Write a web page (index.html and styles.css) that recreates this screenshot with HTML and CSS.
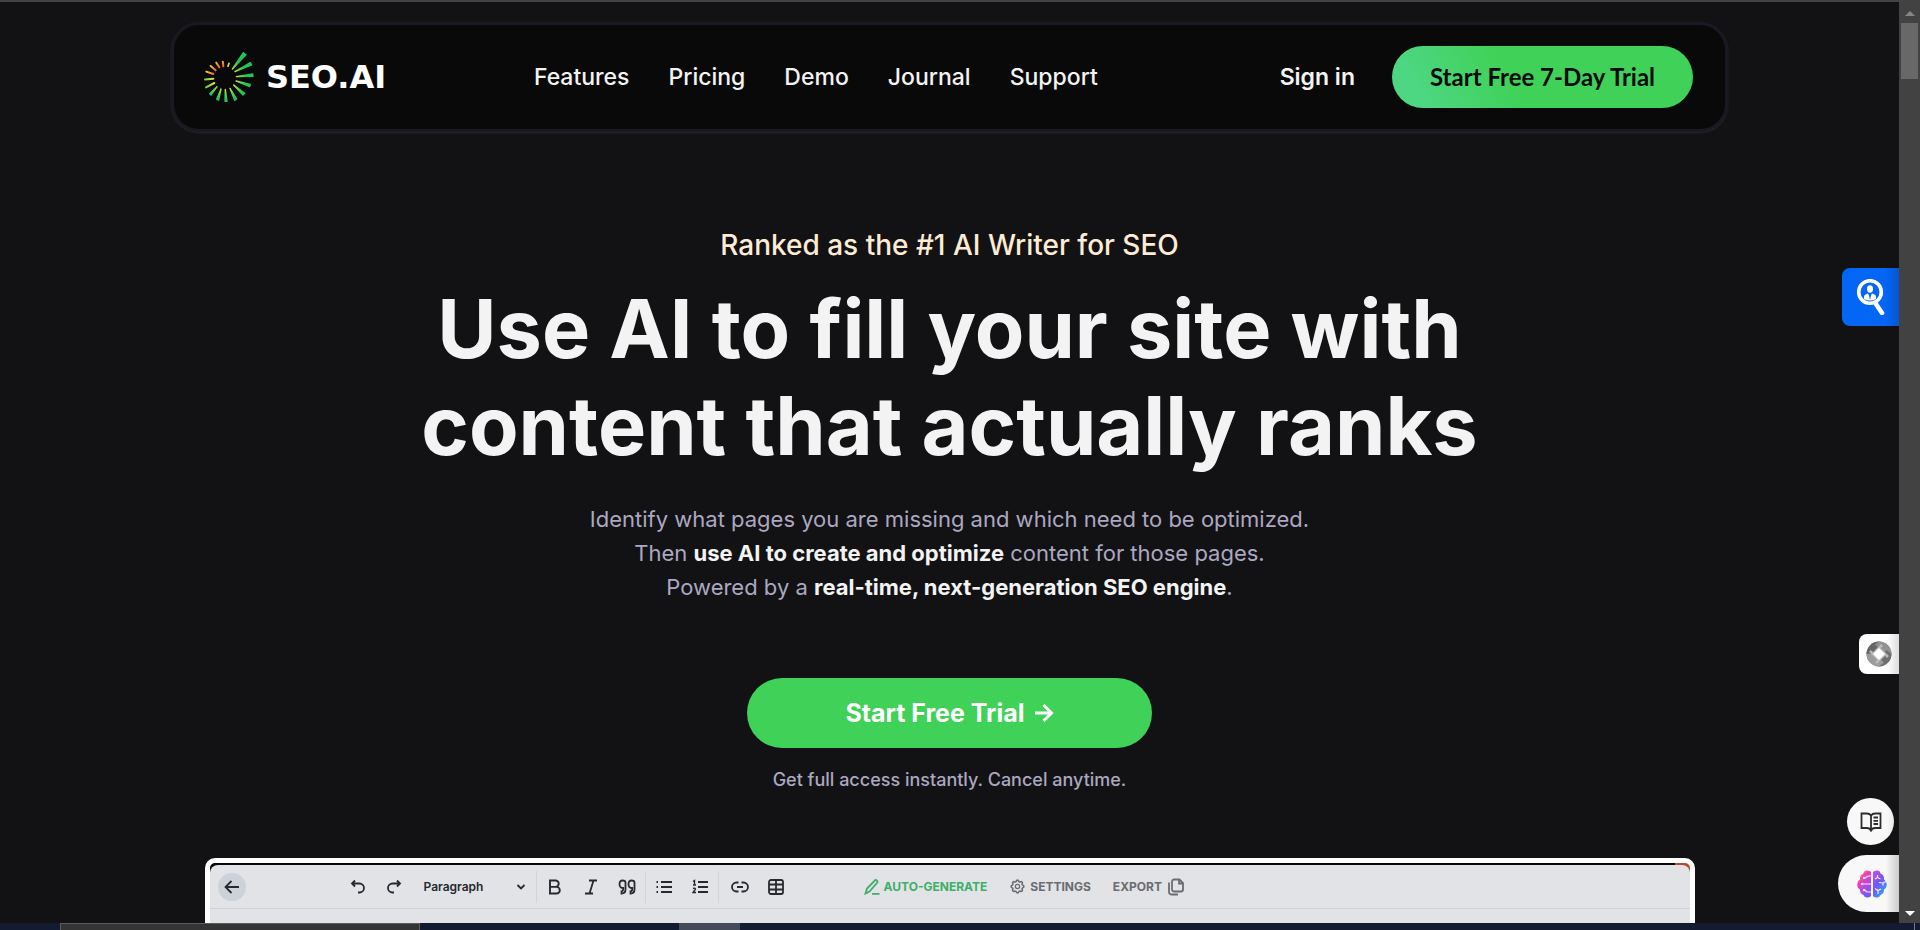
FILE: index.html
```html
<!DOCTYPE html>
<html lang="en">
<head>
<meta charset="utf-8">
<title>SEO.AI</title>
<link rel="stylesheet" href="styles.css">
</head>
<body>
<div class="window">
  <div class="viewport">
    <div class="page">
      <header class="site-header">
        <a class="logo" href="#">
          <svg class="logo-mark" viewBox="125 147 165 165" aria-hidden="true">
            <defs>
              <radialGradient id="green" gradientUnits="userSpaceOnUse" cx="195" cy="232" r="80">
                <stop offset=".38" stop-color="#d9ec3e"/><stop offset=".6" stop-color="#5fd64a"/><stop offset=".8" stop-color="#22c45a"/>
              </radialGradient>
              <radialGradient id="lime" gradientUnits="userSpaceOnUse" cx="195" cy="232" r="70">
                <stop offset=".45" stop-color="#f0e548"/><stop offset=".9" stop-color="#5fd54c"/>
              </radialGradient>
              <radialGradient id="warm" gradientUnits="userSpaceOnUse" cx="195" cy="232" r="62">
                <stop offset=".55" stop-color="#f0592c"/><stop offset="1" stop-color="#f2d341"/>
              </radialGradient>
            </defs>
            <g stroke="url(#green)" fill="url(#green)" stroke-width="4" stroke-linejoin="round" stroke-linecap="round">
              <path d="M216 204 249 155 257 161Z"/><path d="M224 212 270 185 274 192Z"/><path d="M228 227 277 219 278 226Z"/>
              <path d="M227 240 270 250 268 257Z"/><path d="M220 252 253 277 248 282Z"/><path d="M209 262 229 294 223 298Z"/>
              <path d="M195 265 200 301 194 301Z"/><path d="M182 264 175 297 169 295Z"/><path d="M170 257 152 282 148 278Z"/>
            </g>
            <g stroke="url(#lime)" stroke-width="6" stroke-linecap="round">
              <path d="M162 246 137 259M159 233 134 235.500"/>
            </g>
            <g stroke="url(#warm)" stroke-width="6" stroke-linecap="round">
              <path d="M159 219 138 212M166 208 151 195M177 199 168 185M189 196 187.500 182"/>
            </g>
            <path d="M203 196 206 187" stroke="#e6dc43" stroke-width="5" stroke-linecap="round"/>
          </svg>
          <span class="logo-text">SEO.AI</span>
        </a>
        <nav class="nav">
          <a href="#">Features</a>
          <a href="#">Pricing</a>
          <a href="#">Demo</a>
          <a href="#">Journal</a>
          <a href="#">Support</a>
        </nav>
        <div class="actions">
          <a class="sign-in" href="#">Sign in</a>
          <a class="trial" href="#">Start Free 7-Day Trial</a>
        </div>
      </header>

      <main class="hero">
        <p class="eyebrow">Ranked as the #1 AI Writer for SEO</p>
        <h1>Use AI to fill your site with<br>content that actually ranks</h1>
        <p class="lead">Identify what pages you are missing and which need to be optimized.<br>Then <strong>use AI to create and optimize</strong> content for those pages.<br>Powered by a <strong>real-time, next-generation SEO engine</strong>.</p>
        <a class="cta" href="#">Start Free Trial
          <svg width="20" height="20" viewBox="0 0 20 20" fill="none" stroke="currentColor" stroke-width="3" aria-hidden="true"><path d="M1 10h16M9.500 2l8 8-8 8"/></svg>
        </a>
        <p class="note">Get full access instantly. Cancel anytime.</p>
      </main>

      <section class="preview" aria-label="Editor preview">
        <div class="editor">
          <div class="toolbar">
            <button class="back" aria-label="Back"><svg width="16" height="16" viewBox="0 0 16 16"><path d="M15 8H2M7.500 2 1.500 8l6 6"/></svg></button>
            <div class="tools">
              <button class="tool" aria-label="Undo"><svg width="16" height="16" viewBox="0 0 16 16"><path d="M5 1.500 2 4.500l3 3M2 4.500h7.500a4.500 4.500 0 0 1 0 9H8"/></svg></button>
              <button class="tool" aria-label="Redo"><svg width="16" height="16" viewBox="0 0 16 16"><path d="m11 1.500 3 3-3 3M14 4.500H6.500a4.500 4.500 0 0 0 0 9H8"/></svg></button>
              <div class="style-picker">
                <select aria-label="Text style"><option>Paragraph</option></select>
                <svg width="10" height="10" viewBox="0 0 10 10"><path d="m1.500 3 3.500 3.500L8.500 3"/></svg>
              </div>
            </div>
            <div class="tools ruled">
              <button class="tool" aria-label="Bold"><svg width="16" height="16" viewBox="0 0 16 16"><path d="M3 1.500h5.500a3.200 3.200 0 0 1 0 6.400H3zM3 7.900h6.500a3.300 3.300 0 0 1 0 6.600H3z" stroke-width="1.900"/></svg></button>
              <button class="tool" aria-label="Italic"><svg width="16" height="16" viewBox="0 0 16 16"><path d="M6 1.500h8M2 14.500h8M10.500 1.500l-4 13"/></svg></button>
              <button class="tool" aria-label="Quote"><svg width="18" height="16" viewBox="0 0 18 16"><path d="M7.500 3.500v7c0 2.500-1.500 4-4 4v-2.200c1 0 1.700-.8 1.700-2V9C3 9 1.500 7.800 1.500 5.200S2.600 1.500 4.500 1.500s3 .8 3 2zM16.500 3.500v7c0 2.500-1.500 4-4 4v-2.200c1 0 1.700-.8 1.700-2V9c-2.200 0-3.700-1.200-3.700-3.800s1.100-3.700 3-3.700 3 .8 3 2z"/></svg></button>
            </div>
            <div class="tools ruled">
              <button class="tool" aria-label="Bulleted list"><svg width="16" height="16" viewBox="0 0 16 16"><path d="M5 3h11M5 8h11M5 13h11M.5 3H2M.5 8H2M.5 13H2"/></svg></button>
              <button class="tool" aria-label="Numbered list"><svg width="16" height="16" viewBox="0 0 16 16"><path d="M6 3h10M6 8h10M6 13h10"/><path d="M1 2.500 2.500 1.500V6M1 6h3M1 9.500c2.500-1 3 .5 1.500 2L1 13.500h3" stroke-width="1.400"/></svg></button>
            </div>
            <div class="tools ruled links">
              <button class="tool" aria-label="Link"><svg width="18" height="16" viewBox="0 0 18 16"><path d="M7.500 3.500H5.500a4.500 4.500 0 0 0 0 9h2M10.500 3.500h2a4.500 4.500 0 0 1 0 9h-2M6 8h6"/></svg></button>
              <button class="tool" aria-label="Table"><svg width="16" height="16" viewBox="0 0 16 16"><rect x="1" y="1" width="14" height="14" rx="2"/><path d="M1 5.500h14M1 10.500h14M8 1v14"/></svg></button>
            </div>
            <div class="commands">
              <button class="command generate"><svg width="16" height="16" viewBox="0 0 16 16"><path d="M1.500 14.500 3 9.500 10.500 1.800a1.600 1.600 0 0 1 2.600 2L5.500 12.500l-4 2zM8 14.800h7.500"/></svg>AUTO-GENERATE</button>
              <button class="command"><svg width="17" height="17" viewBox="0 0 24 24"><path stroke-width="2.200" d="M10.300 4.300c.4-1.700 3-1.700 3.400 0a1.700 1.700 0 0 0 2.600 1.100c1.500-1 3.300.8 2.400 2.300a1.700 1.700 0 0 0 1 2.600c1.800.4 1.800 3 0 3.400a1.700 1.700 0 0 0-1 2.600c.9 1.500-.9 3.300-2.400 2.400a1.700 1.700 0 0 0-2.600 1c-.4 1.800-3 1.800-3.400 0a1.700 1.700 0 0 0-2.600-1c-1.500.9-3.300-.9-2.400-2.400a1.700 1.700 0 0 0-1-2.600c-1.800-.4-1.800-3 0-3.400a1.700 1.700 0 0 0 1-2.600c-.9-1.500.9-3.300 2.400-2.300a1.700 1.700 0 0 0 2.600-1.100z"/><circle cx="12" cy="12" r="3"/></svg>SETTINGS</button>
              <button class="command export">EXPORT<svg width="16" height="18" viewBox="0 0 16 18"><path d="M6 1.500h5.500L15 5v6.500a2 2 0 0 1-2 2H6a2 2 0 0 1-2-2v-8a2 2 0 0 1 2-2zM11 1.500V5.500h4M1 4.500V14a2.500 2.500 0 0 0 2.500 2.500H10"/></svg></button>
            </div>
          </div>
        </div>
      </section>

      <button class="dock dock-search" aria-label="People search">
        <svg width="30" height="36" viewBox="0 0 30 36"><path d="M20 25l6 9" stroke="#fff" stroke-width="4.500" stroke-linecap="round"/><circle cx="14" cy="13" r="11.300" fill="#0466f5" stroke="#fff" stroke-width="3.600"/><ellipse cx="14" cy="10" rx="3" ry="3.700" fill="#fff"/><path d="M8 20v-2.500c0-1.500 2-2.500 4-3l2 4 2-4c2 .5 4 1.500 4 3V20q-6 3-12 0z" fill="#fff"/><path d="M14 15v5" stroke="#0466f5"/></svg>
      </button>
      <button class="dock dock-ring" aria-label="Assistant">
        <svg width="26" height="26" viewBox="0 0 26 26"><circle cx="13" cy="13" r="12.500" fill="#8d8d8d"/><path d="M13 .5A12.500 12.500 0 0 0 .5 13L7 13 17 4z" fill="#666"/><path d="M25.500 13A12.500 12.500 0 0 0 13 .5l-4 3 10 9z" fill="#929292"/><path d="M13 25.500A12.500 12.500 0 0 0 25.500 13l-5-4-9 11z" fill="#6f6f6f"/><path d="M.5 13A12.500 12.500 0 0 0 13 25.500l5-4-11-9z" fill="#9c9c9c"/><path d="M7 13l9-9M13 7l9 9M19 13l-9 9M13 19l-9-9" stroke="#bababa" stroke-width="2.500"/><path d="M13 7l6 6-6 6-6-6z" fill="#fff"/></svg>
      </button>
      <button class="dock dock-book" aria-label="Reader">
        <svg width="22" height="20" viewBox="0 0 22 20" fill="none" stroke="#2d2d2d" stroke-width="1.800"><path d="M11 3.500Q9.500 1.500 7 1.500H1.500v14.500H7q2.800 0 4 2.500 1.200-2.500 4-2.500h5.500V1.500H15q-2.500 0-4 2zM11 3.500V18M13.500 5.500H18M13.500 8.800H18M13.500 12H18"/></svg>
      </button>
      <button class="dock dock-brain" aria-label="AI sidebar">
        <svg width="30" height="28" viewBox="0 0 30 28"><defs><linearGradient id="left-lobe" x1="0" y1="0" x2=".6" y2="1"><stop offset=".1" stop-color="#ff9a2d"/><stop offset=".4" stop-color="#f23bc0"/><stop offset="1" stop-color="#7556ff"/></linearGradient><linearGradient id="right-lobe" x1="0" y1="0" x2=".7" y2="1"><stop offset="0" stop-color="#d24be0"/><stop offset=".5" stop-color="#7258f5"/><stop offset="1" stop-color="#2faaff"/></linearGradient></defs><path d="M14 2v24q-2 2-4.500 1.500Q7 27 6.500 25 3 24 3 19.500 0 18 .3 14 .5 10.500 3 9.500 2.500 5 6.500 3.500 7 .5 10 .5q3 0 4 1.500z" fill="url(#left-lobe)"/><path d="M16 2v24q2 2 4.500 1.500Q23 27 23.500 25q3.500-1 3.500-5.500 3-1.500 2.700-5.500-.2-3.500-2.700-4.500.5-4.500-3.500-6Q23 .5 20 .5q-3 0-4 1.500z" fill="url(#right-lobe)"/><path d="M14 6h-3L7.500 8.500M14 14H5M14 22h-4L7.500 20M20.500 5v2.500L18 9M20.500 7.500 23.500 9M30 11l-4 2-4-.5M26 13v2.500M18 18.500l3 2 3-1.500M21 20.500V24" fill="none" stroke="#f8e8ff" stroke-width="1.200"/><circle cx="7" cy="8" r="1.200" fill="#fff"/><circle cx="5" cy="14" r="1.200" fill="#fff"/><circle cx="7" cy="20" r="1.200" fill="#fff"/></svg>
      </button>
    </div>
    <div class="scrollbar" aria-hidden="true">
      <span class="arrow-up"></span>
      <span class="thumb"></span>
      <span class="arrow-down"></span>
    </div>
  </div>
  <div class="taskbar" aria-hidden="true"><span class="task-open"></span><span class="task-active"></span><span class="task-edge"></span></div>
</div>
</body>
</html>
```

FILE: styles.css
```css
* { box-sizing: border-box; }
body { margin: 0; background: #121214; font-family: Inter, "Liberation Sans", sans-serif; color: #f3f3f3; }
a { color: inherit; text-decoration: none; }
p, h1 { margin: 0; }
button { border: 0; padding: 0; background: none; color: inherit; font: inherit; }
svg { flex: none; }

.window { display: flex; flex-direction: column; height: 100vh; border-top: 2px solid #424244; }
.viewport { flex: 1; display: flex; min-height: 0; }
.page { position: relative; flex: 1; min-width: 0; overflow: hidden; padding-top: 20px; }

.site-header { display: flex; align-items: center; width: 82%; margin: 0 auto; padding: 21px 32px 21px 28px; border: 3px solid #1a1923; border-radius: 28px; background: #090909; box-shadow: 0 1px 2px #2a2a2d; }
.logo { display: flex; align-items: center; gap: 9px; min-width: 332px; }
.logo-mark { width: 55px; height: 55px; }
.logo-text { font: bold 32px/36px "DejaVu Sans", sans-serif; color: #fff; }
.nav { display: flex; gap: 39px; font-size: 23px; line-height: 28px; font-weight: 500; }
.actions { display: flex; align-items: center; gap: 37px; margin-left: auto; }
.sign-in { font-size: 23px; line-height: 28px; font-weight: 600; }
.trial { padding: 16px 38px; border-radius: 31px; background: linear-gradient(60deg, #4dd783 10%, #40d158 40%); color: #0a0a0a; font: bold 24px/30px Lato, sans-serif; }

.hero { display: flex; flex-direction: column; align-items: center; padding-top: 96px; text-align: center; }
.eyebrow { font-size: 28px; line-height: 34px; font-weight: 500; color: #fdebd3; }
h1 { margin-top: 19px; font-size: 81px; line-height: 97px; font-weight: 700; }
.lead { margin-top: 27px; font-size: 22px; line-height: 34px; color: #aca8c0; }
.lead strong { color: #f3f3f3; }
.cta { display: flex; align-items: center; justify-content: center; gap: 9px; width: 405px; height: 70px; margin-top: 74px; border-radius: 35px; background: #40d158; color: #fff; font-size: 25px; font-weight: 700; }
.note { margin-top: 20px; font-size: 18px; line-height: 24px; font-weight: 500; color: #aca8c0; }

.preview { width: 1490px; max-width: 90%; margin: 66px auto 0; border: 5px solid #fff; border-radius: 10px; background: linear-gradient(90deg, #08090b 99%, #b74b2c 99%); padding-top: 2px; }
.editor { height: 400px; border-radius: 8px 8px 0 0; background: #e1e3e7; color: #27292e; }
.editor svg { fill: none; stroke: currentColor; stroke-width: 1.8; }
.toolbar { display: flex; align-items: center; height: 44px; border-bottom: 1px solid #cfd1d5; }
.back { display: grid; place-items: center; width: 28px; height: 28px; margin: 0 94px 0 8px; border-radius: 50%; background: #cdd2da; }
.tools { display: flex; align-items: center; height: 32px; }
.ruled { border-left: 1px solid #d2d4d8; }
.links { padding-left: 3px; }
.tool { display: grid; place-items: center; width: 36px; height: 32px; }
.style-picker { display: flex; align-items: center; width: 124px; padding-left: 12px; }
.style-picker select { width: 92px; appearance: none; border: 0; padding: 0; background: none; color: inherit; font: 600 12px/18px Inter, sans-serif; }
.commands { display: flex; gap: 22px; margin-left: 70px; color: #6a6c71; font-size: 12px; line-height: 18px; font-weight: 700; }
.command { display: flex; align-items: center; gap: 4px; }
.generate { color: #3fae67; }
.command.export { gap: 6px; }

.dock { position: absolute; right: 0; display: grid; place-items: center; }
.dock-search { top: 266px; width: 57px; height: 58px; border-radius: 8px 0 0 8px; background: linear-gradient(90deg, #0466f5 75%, #0458d2); }
.dock-ring { top: 632px; width: 40px; height: 40px; border-radius: 8px 0 0 8px; background: linear-gradient(90deg, #fff 70%, #dcdcdc); }
.dock-book { top: 796px; right: 5px; width: 47px; height: 47px; border-radius: 50%; background: linear-gradient(90deg, #f8f8f8 85%, #e8e8e8); }
.dock-brain { top: 853px; width: 61px; height: 57px; padding-left: 6px; border-radius: 29px 0 0 29px; background: linear-gradient(90deg, #f8f8f8 78%, #ccc); }

.scrollbar { display: flex; flex-direction: column; align-items: center; width: 21px; padding: 9px 0 7px; background: #424242; }
.arrow-up { border: 5px solid transparent; border-top: 0; border-bottom-color: #868686; }
.thumb { width: 17px; height: 56px; margin-top: 7px; background: #686868; }
.arrow-down { margin-top: auto; border: 5px solid transparent; border-bottom: 0; border-top-color: #fff; }

.taskbar { display: flex; height: 7px; background: #121b31; }
.task-open { width: 360px; margin: 0 259px 0 60px; border: 1px solid #5c5c5c; border-bottom: 0; background: #343434; }
.task-active { width: 61px; background: #454a5a; }
.task-edge { width: 1px; margin: 0 5px 0 auto; background: #747a88; }
```
